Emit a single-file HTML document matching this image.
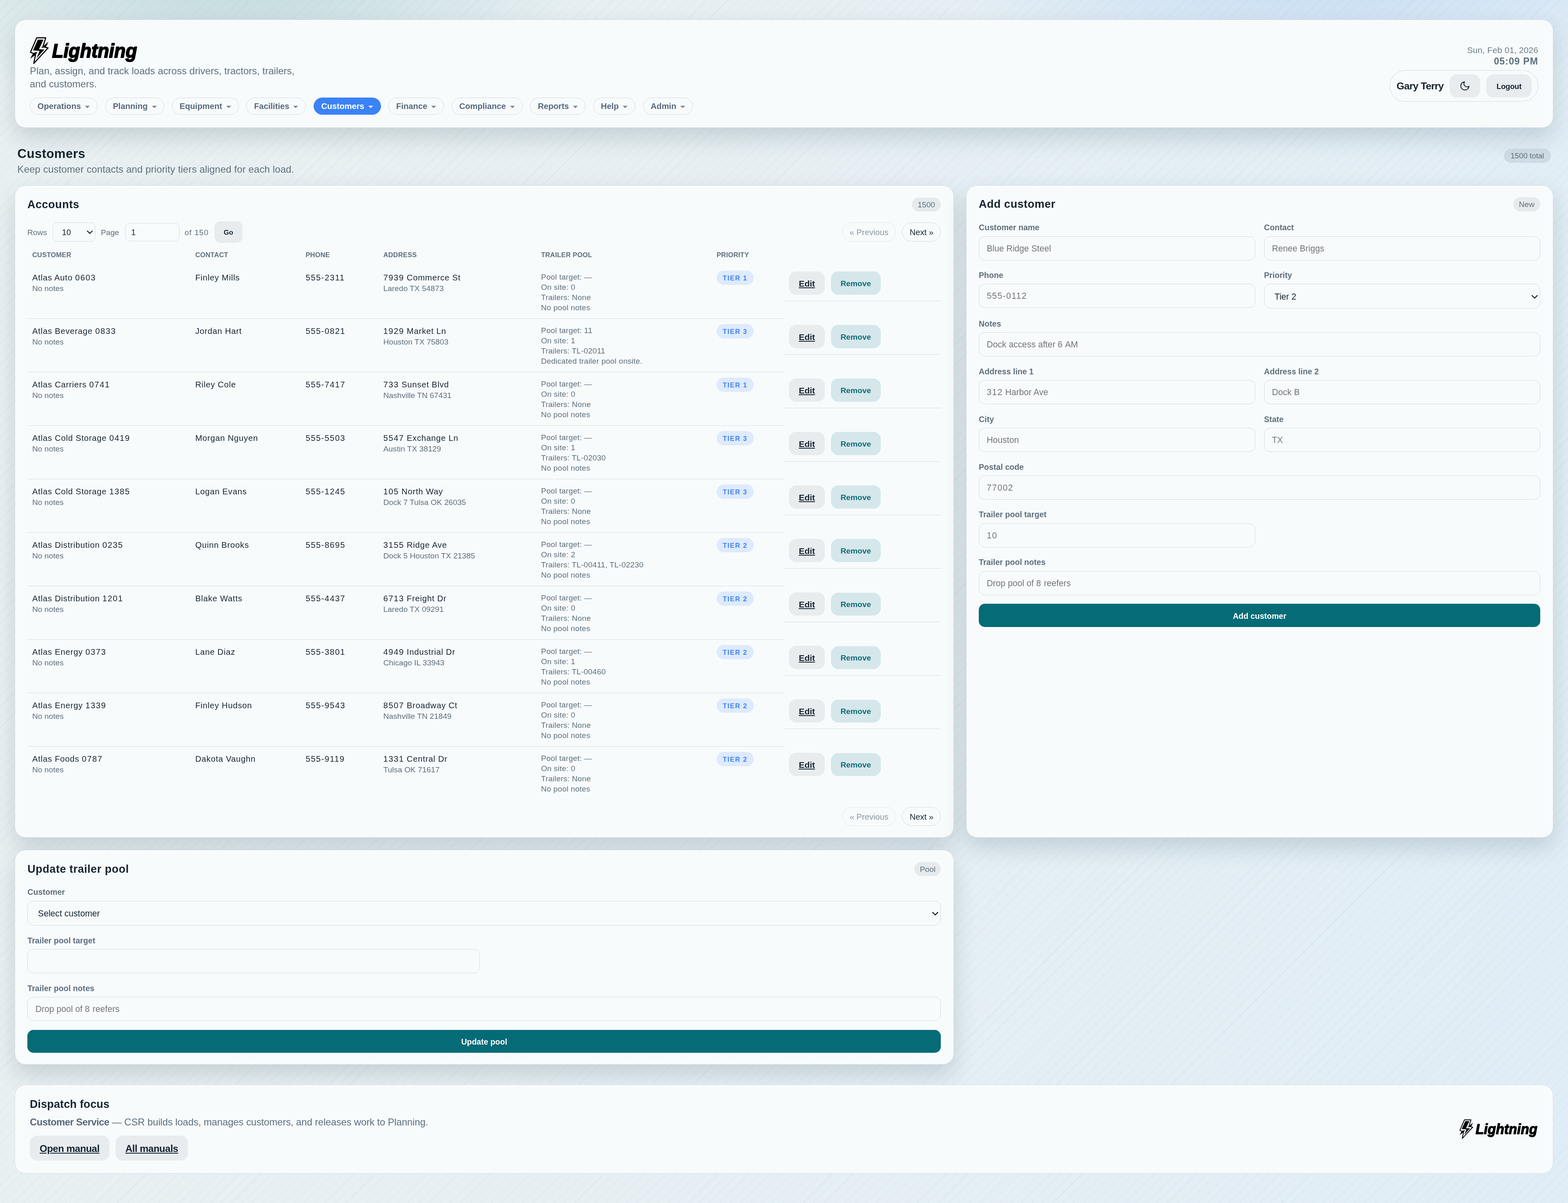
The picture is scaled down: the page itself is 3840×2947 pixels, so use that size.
<!DOCTYPE html>
<html lang="en">
<head>
<meta charset="utf-8">
<title>Lightning — Customers</title>
<style>
html{zoom:1.5}
*{box-sizing:border-box}
body{margin:0;font-family:"Liberation Sans",sans-serif;font-size:16px;color:#14232e;
 background:#e6eff3;
 width:2560px;height:1964.67px}
.page{padding:32px 24px 0;width:2560px;height:1964.67px;
 background:
  repeating-linear-gradient(135deg, rgba(60,90,100,.05) 0, rgba(60,90,100,.05) 1px, transparent 1px, transparent 12px),
  radial-gradient(820px 400px at 15% -4%, rgba(160,200,203,.6), transparent 72%),
  radial-gradient(900px 420px at 84% -6%, rgba(170,205,245,.62), transparent 72%),
  linear-gradient(100deg,#e9f0f2 0%,#e6eff3 50%,#e1edf6 100%)}
.card{will-change:transform;background:#f8fbfc;border:1px solid #d4dfe6;border-radius:18px;box-shadow:0 16px 36px rgba(20,50,60,.16),inset 0 1px 0 rgba(255,255,255,.8)}
.top{height:176.5px;position:relative}
.logo{position:absolute;left:19.33px;top:23.4px;width:181px;height:53.33px}
.tag{position:absolute;left:24px;top:72.6px;margin:0;color:#5d6f7c;font-size:16px;line-height:21.1px}
.nav{position:absolute;left:24px;top:126.4px;display:flex;gap:12.45px}
.pill{display:flex;align-items:center;height:28.6px;padding:0 11.85px;border:1px solid #cfdae1;border-radius:999px;font-weight:700;font-size:13.44px;color:#56687a;background:#f8fbfc}
.pill.active{background:#3b82f6;border-color:#3b82f6;color:#fff}
.caret{display:inline-block;margin-left:6.7px;border-left:4px solid transparent;border-right:4px solid transparent;border-top:4.6px solid #7b8a96;margin-top:1px}
.pill.active .caret{border-top-color:#dbe8ff}
.hright{position:absolute;right:24px;top:0;text-align:right}
.date{position:absolute;right:0;top:41.3px;font-size:14px;letter-spacing:.05px;color:#6b7c88;white-space:nowrap}
.time{position:absolute;right:0;top:58.6px;font-size:15.5px;letter-spacing:.65px;font-weight:700;color:#5d6f7c;white-space:nowrap}
.user{position:absolute;right:0;top:82.1px;height:51.3px;display:flex;align-items:center;gap:10px;padding:0 10px 0 11px;border:1px solid #cdd9e0;border-radius:999px;white-space:nowrap}
.uname{font-weight:700;font-size:16.5px;letter-spacing:-.54px}
.ghost{border:0;background:#e8ecef;border-radius:12px;font-family:inherit;font-weight:700;font-size:13px;color:#14232e;display:inline-flex;align-items:center;justify-content:center;padding:0}
.moon{width:49.8px;height:38px}
.logout{width:74px;height:38px;font-size:12.4px;letter-spacing:-.2px}
.phead{height:94.17px;position:relative;will-change:transform}
h1{margin:0;position:absolute;left:4.4px;top:30.8px;font-size:20.8px;line-height:24px;font-weight:700;letter-spacing:.25px}
.sub{margin:0;position:absolute;left:4.4px;top:58.8px;color:#5d6f7c;font-size:16px;line-height:18px;letter-spacing:.07px}
.badge{display:inline-flex;align-items:center;justify-content:center;background:#e6eaed;color:#5d6f7c;border-radius:999px;font-size:12.8px;height:22.8px;padding:0 9.5px}
.badge.big{position:absolute;right:4px;top:34.3px;height:23px;padding:0 11px;background:rgba(90,112,128,.14);font-size:12.5px}
.grid{display:grid;grid-template-columns:1.6fr 1fr;column-gap:20px;row-gap:20px}
.accounts{grid-column:1;grid-row:1;height:1065.1px;padding:18.8px 20.7px 18.8px 20px;position:relative}
.add{grid-column:2;grid-row:1;padding:18.4px 20.2px 18.4px 20px}
.upd{grid-column:1;grid-row:2;height:350.7px;padding:18.5px 20.7px 18.4px 20.2px}
.chead{display:flex;justify-content:space-between;align-items:center;height:22.6px}
h2{margin:0;font-size:18px;line-height:22.6px;font-weight:700;letter-spacing:.35px;position:relative;top:1.2px}
.pager{display:flex;align-items:center;margin-top:16.8px;height:35.1px;font-size:12.8px;color:#5d6f7c}
.pager .lbl{margin-right:9.4px;position:relative;top:.8px}
.sp{flex:1}
.sel,.inp{display:flex;align-items:center;border:1px solid #cfdae1;border-radius:10px;background:#f8fbfc;color:#14232e;position:relative}
.rows{width:69.7px;height:31.1px;padding-left:14.5px;padding-top:1.6px;margin-right:8.9px;font-size:13.2px;border-radius:8px}
.pg{width:89.2px;height:29.6px;padding-left:9.5px;padding-top:1.6px;margin-right:8.2px;font-size:13.2px;border-radius:8px}
.chev{position:absolute;right:2.6px;top:50%;width:11.9px;height:7.9px;margin-top:-3.6px}
.go{width:46px;height:35.1px;font-size:11.2px;border-radius:10px}
.pbtn{display:inline-flex;align-items:center;height:30.9px;padding:0 11.5px;border:1px solid #cfdae1;border-radius:999px;font-size:13.44px;color:#14232e;margin-left:10.2px}
.pbtn.dis{color:#8a98a3;border-color:#dfe7ec}
table{border-collapse:separate;border-spacing:0;width:100%;table-layout:fixed}
th{text-align:left;font-size:11px;letter-spacing:.12px;text-transform:uppercase;color:#5d6f7c;font-weight:700;padding:3px 8px 0;height:36.7px;vertical-align:middle}
.c1{width:266.1px}.c2{width:180.2px}.c3{width:126.8px}.c4{width:257.6px}.c5{width:286.6px}.c6{width:118.3px}
td{vertical-align:top;padding:11.8px 8px 0;font-size:13.5px;line-height:17px;border-bottom:1px solid #d4dfe6;height:87.35px;letter-spacing:.5px}
tbody tr:last-child td{border-bottom:0}
.d{letter-spacing:1px}
.mt{font-size:12.8px;color:#5d6f7c;line-height:16.8px;letter-spacing:0;margin-top:.4px}
td.tp{font-size:12.7px;color:#5d6f7c;line-height:16.65px;padding-top:11.2px;letter-spacing:.15px}
.tier{display:inline-flex;align-items:center;justify-content:center;width:60.4px;height:22.9px;border-radius:999px;background:#deeafd;color:#3b82f6;font-size:11px;font-weight:700;letter-spacing:1px;margin-top:-4.3px}
td.act{padding:0;border-bottom:0}
.actw{display:flex;gap:10px;align-items:center;padding:10px 8px 10px;border-bottom:1px solid #d4dfe6}
.edit{width:58.2px;height:38.2px;text-decoration:underline;font-size:14px;letter-spacing:0}
.rm{width:81.5px;height:37.6px;background:#d5e7ea;color:#0f6b75;font-size:12.8px;letter-spacing:0}
.pager.bottom{margin-top:11.2px;height:31.1px}
.form{display:grid;grid-template-columns:1fr 1fr;column-gap:14.4px;row-gap:14.4px;margin-top:17.1px}
.f{display:block}
.f>span:first-child{display:block;font-size:13.1px;font-weight:700;color:#5d6f7c;line-height:17.47px;margin-bottom:6.8px;position:relative;top:1.3px}
.f .inp{display:block;height:39.33px;line-height:38.6px;padding-left:12.3px;font-size:14.1px;border-radius:10px;white-space:nowrap}
.f .sel{height:40.4px;padding-left:16.5px;padding-top:1px;font-size:14.1px;border-radius:10px}
.ph{color:#757575 !important}
.full{grid-column:1 / span 2}
.primary{height:37.8px;border:0;border-radius:10px;background:#056b76;color:#fff;font-family:inherit;font-weight:700;font-size:13px}
.f .sel .chev{right:2.6px;width:12.4px;height:8.3px;margin-top:-3.4px}
.foot{margin-top:32.87px;height:145px;box-shadow:none;position:relative}
h3{margin:0;position:absolute;left:24px;top:21.6px;font-size:18px;font-weight:700;letter-spacing:.07px}
.ft{margin:0;position:absolute;left:24px;top:51px;color:#5d6f7c;font-size:16px;white-space:nowrap;letter-spacing:-.11px}
.ft b{color:#56687a;letter-spacing:-.4px}
.fbtns{position:absolute;left:24px;top:82.5px;display:flex;gap:10.2px}
.lnk{height:40.9px;padding:2.2px 16px 0;font-size:16px;letter-spacing:-.33px;text-decoration:underline;border-radius:12px}
.logo.small{left:2354.6px;top:52.5px;width:131.6px;height:38.8px}
tbody tr:last-child .actw{border-bottom:0}
.lbl.of{letter-spacing:.65px;margin-right:9.1px}
.ph .d{letter-spacing:.9px}
.chead .badge{position:relative;top:.6px}
.primary{padding:2.4px 0 0}
.ghost,.pbtn,.badge,.tier{padding-top:1.4px}
.pill{padding-top:1.2px}
.go{padding-top:2.4px}
.lnk{padding-top:2.2px}
.moon{padding-top:0}
.upd .badge{padding-left:8.8px;padding-right:8.8px}

</style>
</head>
<body>
<div class="page">
<header class="card top">
<div class="brand">
<svg class="logo" viewBox="0 0 5700 1680">
<g>
<path d="M500 182 L965 182 L820 640 L1085 700 L350 1500 L440 1040 L180 925 Z" fill="none" stroke="#000" stroke-width="56" stroke-linejoin="round"/>
<path d="M560 275 L850 275 L615 770 L900 785 L490 1230 L650 850 L310 830 Z" fill="#000"/>
<path d="M1105 385 L800 640 L720 705 L840 690 L905 640 L970 668 Z" fill="#000"/>
<path d="M165 1255 L325 960 L545 900 L440 1060 Z" fill="#000"/>
</g>
<text x="1291" y="1197" font-family="Liberation Sans, sans-serif" font-weight="700" font-style="italic" font-size="1010" textLength="4370" lengthAdjust="spacingAndGlyphs" fill="#000" stroke="#000" stroke-width="46" stroke-linejoin="round">Lightning</text>
</svg>
<p class="tag">Plan, assign, and track loads across drivers, tractors, trailers,<br>and customers.</p>
<nav class="nav">
<a class="pill">Operations<i class="caret"></i></a>
<a class="pill">Planning<i class="caret"></i></a>
<a class="pill">Equipment<i class="caret"></i></a>
<a class="pill">Facilities<i class="caret"></i></a>
<a class="pill active">Customers<i class="caret"></i></a>
<a class="pill">Finance<i class="caret"></i></a>
<a class="pill">Compliance<i class="caret"></i></a>
<a class="pill">Reports<i class="caret"></i></a>
<a class="pill">Help<i class="caret"></i></a>
<a class="pill">Admin<i class="caret"></i></a>
</nav>
</div>
<div class="hright">
<div class="date">Sun, Feb 01, 2026</div>
<div class="time">05:09 PM</div>
<div class="user"><span class="uname">Gary Terry</span><button class="ghost moon"><svg viewBox="0 0 24 24" width="18" height="18" fill="none" stroke="#14232e" stroke-width="1.85" stroke-linecap="round" stroke-linejoin="round"><path d="M21 12.79A9 9 0 1 1 11.21 3 7 7 0 0 0 21 12.79z"/></svg></button><button class="ghost logout">Logout</button></div>
</div>
</header>
<div class="phead">
<div><h1>Customers</h1><p class="sub">Keep customer contacts and priority tiers aligned for each load.</p></div>
<span class="badge big">1500 total</span>
</div>
<div class="grid">
<section class="card accounts">
<div class="chead"><h2>Accounts</h2><span class="badge">1500</span></div>
<div class="pager"><span class="lbl">Rows</span><span class="sel rows">10<svg class="chev" viewBox="0 0 12 8"><path d="M1.5 1.5 L6 6 L10.5 1.5" fill="none" stroke="#14232e" stroke-width="1.6"/></svg></span><span class="lbl">Page</span><span class="inp pg">1</span><span class="lbl of">of 150</span><button class="ghost go">Go</button><span class="sp"></span><span class="pbtn dis">« Previous</span><span class="pbtn">Next »</span></div>
<table>
<thead><tr><th class="c1">Customer</th><th class="c2">Contact</th><th class="c3">Phone</th><th class="c4">Address</th><th class="c5">Trailer pool</th><th class="c6">Priority</th><th class="c7"></th></tr></thead>
<tbody>
<tr><td><div class="nm">Atlas Auto <span class="d">0603</span></div><div class="mt">No notes</div></td><td>Finley Mills</td><td><span class="d">555-2311</span></td><td><div class="nm"><span class="d">7939</span> Commerce St</div><div class="mt">Laredo TX 54873</div></td><td class="tp">Pool target: —<br>On site: 0<br>Trailers: None<br>No pool notes</td><td><span class="tier">TIER 1</span></td><td class="act"><div class="actw"><a class="ghost edit">Edit</a><button class="ghost rm">Remove</button></div></td></tr>
<tr><td><div class="nm">Atlas Beverage <span class="d">0833</span></div><div class="mt">No notes</div></td><td>Jordan Hart</td><td><span class="d">555-0821</span></td><td><div class="nm"><span class="d">1929</span> Market Ln</div><div class="mt">Houston TX 75803</div></td><td class="tp">Pool target: 11<br>On site: 1<br>Trailers: TL-02011<br>Dedicated trailer pool onsite.</td><td><span class="tier">TIER 3</span></td><td class="act"><div class="actw"><a class="ghost edit">Edit</a><button class="ghost rm">Remove</button></div></td></tr>
<tr><td><div class="nm">Atlas Carriers <span class="d">0741</span></div><div class="mt">No notes</div></td><td>Riley Cole</td><td><span class="d">555-7417</span></td><td><div class="nm"><span class="d">733</span> Sunset Blvd</div><div class="mt">Nashville TN 67431</div></td><td class="tp">Pool target: —<br>On site: 0<br>Trailers: None<br>No pool notes</td><td><span class="tier">TIER 1</span></td><td class="act"><div class="actw"><a class="ghost edit">Edit</a><button class="ghost rm">Remove</button></div></td></tr>
<tr><td><div class="nm">Atlas Cold Storage <span class="d">0419</span></div><div class="mt">No notes</div></td><td>Morgan Nguyen</td><td><span class="d">555-5503</span></td><td><div class="nm"><span class="d">5547</span> Exchange Ln</div><div class="mt">Austin TX 38129</div></td><td class="tp">Pool target: —<br>On site: 1<br>Trailers: TL-02030<br>No pool notes</td><td><span class="tier">TIER 3</span></td><td class="act"><div class="actw"><a class="ghost edit">Edit</a><button class="ghost rm">Remove</button></div></td></tr>
<tr><td><div class="nm">Atlas Cold Storage <span class="d">1385</span></div><div class="mt">No notes</div></td><td>Logan Evans</td><td><span class="d">555-1245</span></td><td><div class="nm"><span class="d">105</span> North Way</div><div class="mt">Dock 7 Tulsa OK 26035</div></td><td class="tp">Pool target: —<br>On site: 0<br>Trailers: None<br>No pool notes</td><td><span class="tier">TIER 3</span></td><td class="act"><div class="actw"><a class="ghost edit">Edit</a><button class="ghost rm">Remove</button></div></td></tr>
<tr><td><div class="nm">Atlas Distribution <span class="d">0235</span></div><div class="mt">No notes</div></td><td>Quinn Brooks</td><td><span class="d">555-8695</span></td><td><div class="nm"><span class="d">3155</span> Ridge Ave</div><div class="mt">Dock 5 Houston TX 21385</div></td><td class="tp">Pool target: —<br>On site: 2<br>Trailers: TL-00411, TL-02230<br>No pool notes</td><td><span class="tier">TIER 2</span></td><td class="act"><div class="actw"><a class="ghost edit">Edit</a><button class="ghost rm">Remove</button></div></td></tr>
<tr><td><div class="nm">Atlas Distribution <span class="d">1201</span></div><div class="mt">No notes</div></td><td>Blake Watts</td><td><span class="d">555-4437</span></td><td><div class="nm"><span class="d">6713</span> Freight Dr</div><div class="mt">Laredo TX 09291</div></td><td class="tp">Pool target: —<br>On site: 0<br>Trailers: None<br>No pool notes</td><td><span class="tier">TIER 2</span></td><td class="act"><div class="actw"><a class="ghost edit">Edit</a><button class="ghost rm">Remove</button></div></td></tr>
<tr><td><div class="nm">Atlas Energy <span class="d">0373</span></div><div class="mt">No notes</div></td><td>Lane Diaz</td><td><span class="d">555-3801</span></td><td><div class="nm"><span class="d">4949</span> Industrial Dr</div><div class="mt">Chicago IL 33943</div></td><td class="tp">Pool target: —<br>On site: 1<br>Trailers: TL-00460<br>No pool notes</td><td><span class="tier">TIER 2</span></td><td class="act"><div class="actw"><a class="ghost edit">Edit</a><button class="ghost rm">Remove</button></div></td></tr>
<tr><td><div class="nm">Atlas Energy <span class="d">1339</span></div><div class="mt">No notes</div></td><td>Finley Hudson</td><td><span class="d">555-9543</span></td><td><div class="nm"><span class="d">8507</span> Broadway Ct</div><div class="mt">Nashville TN 21849</div></td><td class="tp">Pool target: —<br>On site: 0<br>Trailers: None<br>No pool notes</td><td><span class="tier">TIER 2</span></td><td class="act"><div class="actw"><a class="ghost edit">Edit</a><button class="ghost rm">Remove</button></div></td></tr>
<tr><td><div class="nm">Atlas Foods <span class="d">0787</span></div><div class="mt">No notes</div></td><td>Dakota Vaughn</td><td><span class="d">555-9119</span></td><td><div class="nm"><span class="d">1331</span> Central Dr</div><div class="mt">Tulsa OK 71617</div></td><td class="tp">Pool target: —<br>On site: 0<br>Trailers: None<br>No pool notes</td><td><span class="tier">TIER 2</span></td><td class="act"><div class="actw"><a class="ghost edit">Edit</a><button class="ghost rm">Remove</button></div></td></tr>
</tbody>
</table>
<div class="pager bottom"><span class="sp"></span><span class="pbtn dis">« Previous</span><span class="pbtn">Next »</span></div>
</section>
<section class="card add">
<div class="chead"><h2>Add customer</h2><span class="badge">New</span></div>
<div class="form">
<label class="f "><span>Customer name</span><span class="inp ph">Blue Ridge Steel</span></label>
<label class="f "><span>Contact</span><span class="inp ph">Renee Briggs</span></label>
<label class="f "><span>Phone</span><span class="inp ph"><span class="d">555-0112</span></span></label>
<label class="f"><span>Priority</span><span class="sel">Tier 2<svg class="chev" viewBox="0 0 12 8"><path d="M1.5 1.5 L6 6 L10.5 1.5" fill="none" stroke="#14232e" stroke-width="1.6"/></svg></span></label>
<label class="f full"><span>Notes</span><span class="inp ph">Dock access after <span class="d">6</span> AM</span></label>
<label class="f "><span>Address line 1</span><span class="inp ph"><span class="d">312</span> Harbor Ave</span></label>
<label class="f "><span>Address line 2</span><span class="inp ph">Dock B</span></label>
<label class="f "><span>City</span><span class="inp ph">Houston</span></label>
<label class="f "><span>State</span><span class="inp ph">TX</span></label>
<label class="f full"><span>Postal code</span><span class="inp ph"><span class="d">77002</span></span></label>
<label class="f "><span>Trailer pool target</span><span class="inp ph"><span class="d">10</span></span></label>
<span></span>
<label class="f full"><span>Trailer pool notes</span><span class="inp ph">Drop pool of <span class="d">8</span> reefers</span></label>
<button class="primary full">Add customer</button>
</div>
</section>
<section class="card upd">
<div class="chead"><h2>Update trailer pool</h2><span class="badge">Pool</span></div>
<div class="form">
<label class="f full"><span>Customer</span><span class="sel">Select customer<svg class="chev" viewBox="0 0 12 8"><path d="M1.5 1.5 L6 6 L10.5 1.5" fill="none" stroke="#14232e" stroke-width="1.6"/></svg></span></label>
<label class="f "><span>Trailer pool target</span><span class="inp ph">&nbsp;</span></label>
<span></span>
<label class="f full"><span>Trailer pool notes</span><span class="inp ph">Drop pool of <span class="d">8</span> reefers</span></label>
<button class="primary full">Update pool</button>
</div>
</section>
</div>
<footer class="card foot">
<div>
<h3>Dispatch focus</h3>
<p class="ft"><b>Customer Service</b> — CSR builds loads, manages customers, and releases work to Planning.</p>
<div class="fbtns"><a class="ghost lnk">Open manual</a><a class="ghost lnk">All manuals</a></div>
</div>
<svg class="logo small" viewBox="0 0 5700 1680">
<g>
<path d="M500 182 L965 182 L820 640 L1085 700 L350 1500 L440 1040 L180 925 Z" fill="none" stroke="#000" stroke-width="56" stroke-linejoin="round"/>
<path d="M560 275 L850 275 L615 770 L900 785 L490 1230 L650 850 L310 830 Z" fill="#000"/>
<path d="M1105 385 L800 640 L720 705 L840 690 L905 640 L970 668 Z" fill="#000"/>
<path d="M165 1255 L325 960 L545 900 L440 1060 Z" fill="#000"/>
</g>
<text x="1291" y="1197" font-family="Liberation Sans, sans-serif" font-weight="700" font-style="italic" font-size="1010" textLength="4370" lengthAdjust="spacingAndGlyphs" fill="#000" stroke="#000" stroke-width="46" stroke-linejoin="round">Lightning</text>
</svg>
</footer>
</div>
</body>
</html>
